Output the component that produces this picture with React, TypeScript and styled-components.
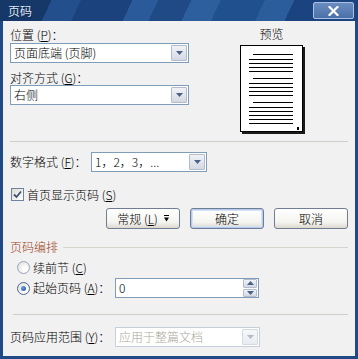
import React from "react";
import styled, { createGlobalStyle } from "styled-components";

const GlobalStyle = createGlobalStyle`
  html, body { margin: 0; padding: 0; background: #fff; }
  body {
    font-family: "Noto Sans CJK SC", "Noto Sans", sans-serif;
    font-size: 12px;
    font-weight: 300;
    line-height: 14px;
    color: #000;
  }
  * { box-sizing: border-box; }
`;

const Window = styled.div`
  width: 358px;
  height: 359px;
  display: flex;
  flex-direction: column;
  background: #1f4a86;
  padding-bottom: 3px;
`;

const TitleBar = styled.div`
  height: 21px;
  flex-shrink: 0;
  display: flex;
  align-items: center;
  justify-content: space-between;
  padding: 0 4px 0 8px;
  background-color: #1c437e;
  background-image: linear-gradient(
    115deg,
    #163868 0 14%,
    #23508d 14% 22%,
    #1b427c 22% 36%,
    #2a5a99 36% 43%,
    #1f4a86 43% 52%,
    #2d5f9f 52% 60%,
    #21508e 60% 72%,
    #2b5c9b 72% 80%,
    #1a4380 80% 100%
  );
`;

const TitleText = styled.span`
  color: #dfe8f8;
  font-size: 12px;
  font-weight: 400;
  text-shadow: 1px 1px 0 #0d2550;
`;

const CloseButton = styled.div`
  width: 41px;
  height: 17px;
  border: 1px solid #a9c0e2;
  border-radius: 2px;
  background: linear-gradient(#6a8cc0, #4b71aa);
  display: flex;
  align-items: center;
  justify-content: center;
`;

const Body = styled.div`
  flex: 1;
  margin: 0 3px;
  background: #f1f1f1;
  padding: 7px 7px 0 7px;
  display: flex;
  flex-direction: column;
`;

const Top = styled.div`
  display: grid;
  grid-template-columns: 179px 1fr;
  height: 105px;
`;

const LeftCol = styled.div`
  display: flex;
  flex-direction: column;
`;

const FieldLabel = styled.div<{ $mt?: number }>`
  height: 14px;
  margin-top: ${(p) => p.$mt ?? 0}px;
  white-space: nowrap;
`;

const Mn = styled.span`
  text-decoration: underline;
  text-underline-offset: 1px;
`;

const SelectBox = styled.div<{ $w: number; $mt?: number; $disabled?: boolean }>`
  width: ${(p) => p.$w}px;
  height: 20px;
  flex-shrink: 0;
  margin-top: ${(p) => p.$mt ?? 0}px;
  border: 1px solid ${(p) => (p.$disabled ? "#c6cfdb" : "#7f9db9")};
  background: #fff;
  display: flex;
  align-items: center;
  justify-content: space-between;
  padding-left: 3px;
  color: ${(p) => (p.$disabled ? "#aca899" : "#000")};
  white-space: nowrap;
`;

const ArrowBtn = styled.div<{ $disabled?: boolean }>`
  width: 16px;
  height: 16px;
  margin-right: 1px;
  border: 1px solid ${(p) => (p.$disabled ? "#d4d9e2" : "#b3bccd")};
  border-radius: 1px;
  background: ${(p) =>
    p.$disabled
      ? "linear-gradient(#f6f7f9, #e8ebf0)"
      : "linear-gradient(#f0f2f6, #d3d9e4)"};
  display: flex;
  align-items: center;
  justify-content: center;
`;

const Tri = ({ up, color }: { up?: boolean; color: string }) => (
  <svg width="7" height="4" viewBox="0 0 7 4">
    <path d={up ? "M0 4 L3.5 0 L7 4 Z" : "M0 0 L7 0 L3.5 4 Z"} fill={color} />
  </svg>
);

const PreviewCol = styled.div`
  padding-left: 51px;
  display: flex;
  flex-direction: column;
  align-items: flex-start;
`;

const PreviewTitle = styled.div`
  width: 63px;
  text-align: center;
  margin-top: -1px;
  height: 14px;
`;

const Page = styled.div`
  width: 63px;
  height: 87px;
  margin-top: 4px;
  background: #fff;
  border: 1px solid #000;
  box-shadow: 2px 2px 0 #1a1a1a;
`;

const Separator = styled.div<{ $mt: number; $ml?: number }>`
  height: 1px;
  margin-top: ${(p) => p.$mt}px;
  margin-left: ${(p) => p.$ml ?? 0}px;
  background: #cfcfc8;
`;

const Row = styled.div<{ $mt: number; $ml?: number; $h?: number }>`
  display: flex;
  align-items: center;
  height: ${(p) => p.$h ?? 20}px;
  margin-top: ${(p) => p.$mt}px;
  margin-left: ${(p) => p.$ml ?? 0}px;
  white-space: nowrap;
`;

const RowLabel = styled.div<{ $w: number }>`
  width: ${(p) => p.$w}px;
  flex-shrink: 0;
`;

const CheckBox = styled.div`
  width: 13px;
  height: 13px;
  margin-right: 3px;
  border: 1px solid #6f82a3;
  background: linear-gradient(135deg, #dcdcd6, #ffffff);
  display: flex;
  align-items: center;
  justify-content: center;
`;

const ButtonRow = styled.div`
  display: flex;
  justify-content: flex-end;
  gap: 10px;
  margin-top: 7px;
`;

const Button = styled.div<{ $default?: boolean }>`
  width: 74px;
  height: 21px;
  border: 1px solid #707d92;
  border-radius: 3px;
  background: linear-gradient(#ffffff, #f4f4f0 70%, #dcd8ce);
  box-shadow: ${(p) =>
    p.$default ? "inset 0 0 0 1px #b3cbee, inset 0 0 0 2px #d6e3f5" : "none"};
  display: flex;
  align-items: center;
  justify-content: center;
  gap: 6px;
  white-space: nowrap;
`;

const GroupHeader = styled.div`
  display: flex;
  align-items: center;
  gap: 5px;
  height: 14px;
  margin-top: 11px;
  color: #9c3f22;
`;

const GroupLine = styled.div`
  flex: 1;
  height: 1px;
  background: #d4d4cc;
`;

const Radio = styled.div<{ $checked?: boolean }>`
  width: 13px;
  height: 13px;
  flex-shrink: 0;
  margin-right: 3px;
  border-radius: 50%;
  border: 1px solid ${(p) => (p.$checked ? "#4f6892" : "#9aa6ba")};
  background: radial-gradient(circle at 65% 65%, #ffffff 20%, #dcdcd6 90%);
  display: flex;
  align-items: center;
  justify-content: center;
`;

const RadioDot = styled.div`
  width: 5px;
  height: 5px;
  border-radius: 50%;
  background: radial-gradient(circle at 35% 35%, #6b9ae0, #1f4ea0);
`;

const InputBox = styled.div<{ $w: number }>`
  width: ${(p) => p.$w}px;
  height: 20px;
  flex-shrink: 0;
  border: 1px solid #7f9db9;
  background: #fff;
  display: flex;
  align-items: center;
  justify-content: space-between;
  padding-left: 3px;
`;

const Spin = styled.div`
  width: 15px;
  height: 18px;
  display: flex;
  flex-direction: column;
  gap: 1px;
  padding: 0 1px 0 0;
`;

const SpinBtn = styled.div`
  flex: 1;
  width: 14px;
  border: 1px solid #b3bccd;
  border-radius: 1px;
  background: linear-gradient(#f0f2f6, #d3d9e4);
  display: flex;
  align-items: center;
  justify-content: center;
`;

const PageLines = () => {
  const full: number[] = [13, 17, 21, 25, 37, 41, 45, 49, 61, 65, 69, 73, 77];
  const indent: number[] = [8, 32, 56];
  return (
    <svg width="61" height="85" viewBox="0 0 61 85">
      {indent.map((y) => (
        <line key={"i" + y} x1="12" x2="52" y1={y + 0.5} y2={y + 0.5} stroke="#000" strokeWidth="1" />
      ))}
      {full.map((y) => (
        <line key={"f" + y} x1="8" x2="52" y1={y + 0.5} y2={y + 0.5} stroke="#000" strokeWidth="1" />
      ))}
      <rect x="56" y="81" width="2" height="3" fill="#000" />
    </svg>
  );
};

export default function App() {
  return (
    <>
      <GlobalStyle />
      <Window>
        <TitleBar>
          <TitleText>页码</TitleText>
          <CloseButton>
            <svg width="11" height="10" viewBox="0 0 11 10">
              <path d="M1.5 1 L9.5 9 M9.5 1 L1.5 9" stroke="#fff" strokeWidth="2.2" strokeLinecap="square" />
            </svg>
          </CloseButton>
        </TitleBar>
        <Body>
          <Top>
            <LeftCol>
              <FieldLabel>
                位置 (<Mn>P</Mn>)：
              </FieldLabel>
              <SelectBox $w={179} $mt={1}>
                页面底端 (页脚)
                <ArrowBtn>
                  <Tri color="#4d6185" />
                </ArrowBtn>
              </SelectBox>
              <FieldLabel $mt={8}>
                对齐方式 (<Mn>G</Mn>)：
              </FieldLabel>
              <SelectBox $w={179}>
                右侧
                <ArrowBtn>
                  <Tri color="#4d6185" />
                </ArrowBtn>
              </SelectBox>
            </LeftCol>
            <PreviewCol>
              <PreviewTitle>预览</PreviewTitle>
              <Page>
                <PageLines />
              </Page>
            </PreviewCol>
          </Top>

          <Separator $mt={8} />

          <Row $mt={10}>
            <RowLabel $w={81}>
              数字格式 (<Mn>F</Mn>)：
            </RowLabel>
            <SelectBox $w={116}>
              1，2，3，...
              <ArrowBtn>
                <Tri color="#4d6185" />
              </ArrowBtn>
            </SelectBox>
          </Row>

          <Row $mt={16} $ml={1} $h={13}>
            <CheckBox>
              <svg width="9" height="9" viewBox="0 0 9 9">
                <path d="M1 4.5 L3.5 7 L8 1.5" stroke="#3e5075" strokeWidth="1.8" fill="none" />
              </svg>
            </CheckBox>
            首页显示页码 (<Mn>S</Mn>)
          </Row>

          <ButtonRow>
            <Button>
              <span>
                常规 (<Mn>L</Mn>)
              </span>
              <svg width="5" height="7" viewBox="0 0 5 7">
                <rect x="0" y="0" width="5" height="1" fill="#000" />
                <path d="M0 2.5 L5 2.5 L2.5 6.5 Z" fill="#000" />
              </svg>
            </Button>
            <Button $default>确定</Button>
            <Button>取消</Button>
          </ButtonRow>

          <GroupHeader>
            页码编排
            <GroupLine />
          </GroupHeader>

          <Row $mt={7} $ml={7} $h={13}>
            <Radio />
            续前节 (<Mn>C</Mn>)
          </Row>

          <Row $mt={4} $ml={7}>
            <Radio $checked>
              <RadioDot />
            </Radio>
            <RowLabel $w={82}>
              起始页码 (<Mn>A</Mn>)：
            </RowLabel>
            <InputBox $w={144}>
              0
              <Spin>
                <SpinBtn>
                  <Tri up color="#4d6185" />
                </SpinBtn>
                <SpinBtn>
                  <Tri color="#4d6185" />
                </SpinBtn>
              </Spin>
            </InputBox>
          </Row>

          <Separator $mt={16} $ml={3} />

          <Row $mt={12}>
            <RowLabel $w={105}>
              页码应用范围 (<Mn>Y</Mn>)：
            </RowLabel>
            <SelectBox $w={145} $disabled>
              应用于整篇文档
              <ArrowBtn $disabled>
                <Tri color="#b4bac6" />
              </ArrowBtn>
            </SelectBox>
          </Row>
        </Body>
      </Window>
    </>
  );
}
